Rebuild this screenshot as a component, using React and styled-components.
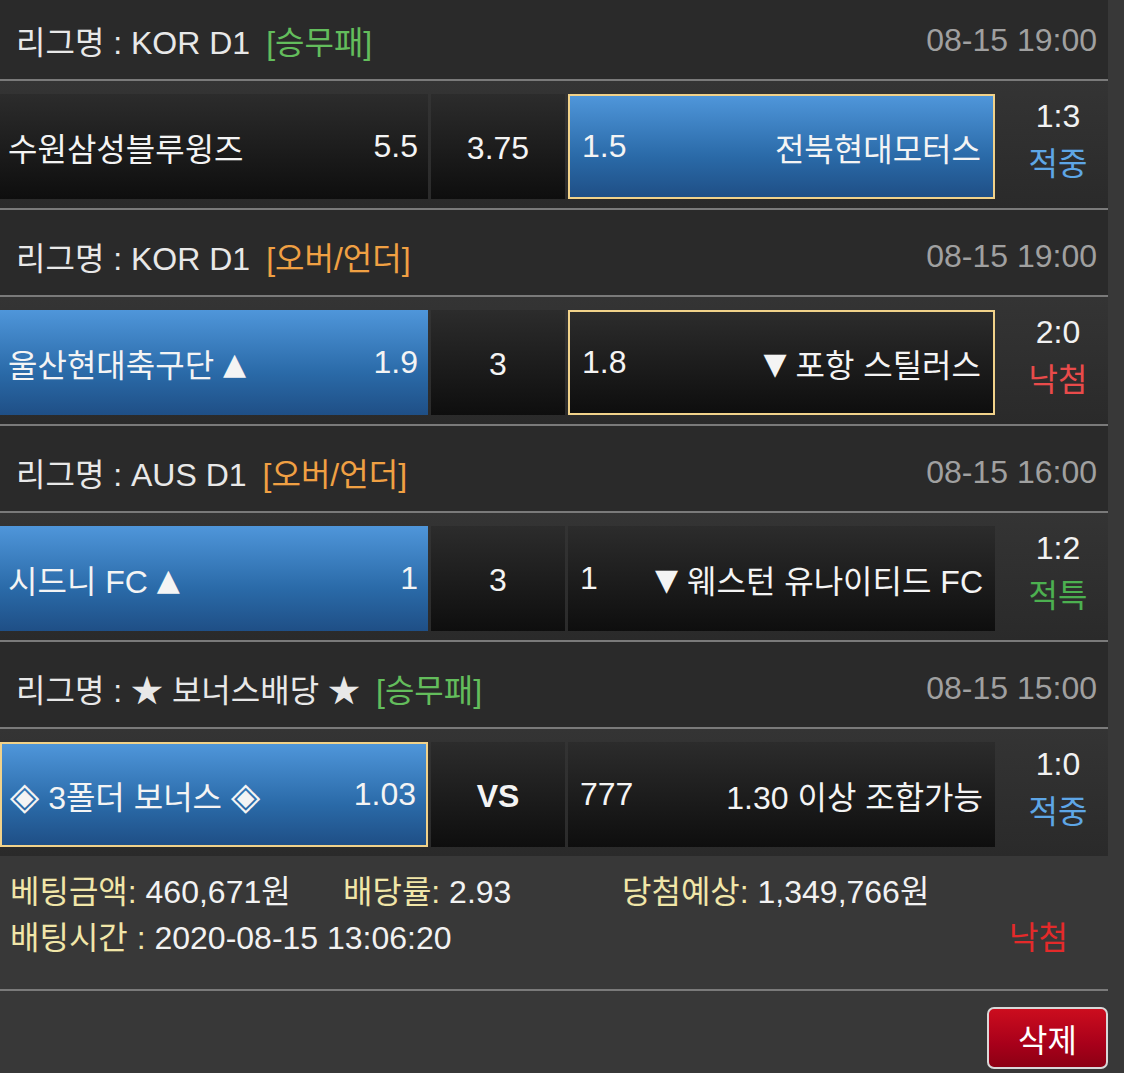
import React from "react";
import styled, { createGlobalStyle } from "styled-components";

const GlobalStyle = createGlobalStyle`
  body {
    margin: 0;
    background: #383838;
    font-family: "Liberation Sans", Arial, "Noto Sans CJK KR", sans-serif;
    color: #f2f2f2;
  }
`;

const Page = styled.div`
  width: 1108px;
  margin-top: -6px;
`;

const Header = styled.div`
  height: 87px;
  box-sizing: border-box;
  padding: 7px 11px 0 16px;
  background: #2a2a2a;
  display: flex;
  align-items: center;
  justify-content: space-between;
  font-size: 32px;
  border-bottom: 2px solid #7a7a7a;
`;

const League = styled.div`
  color: #e8e8e8;
  display: flex;
  align-items: center;
`;

const Tag = styled.span`
  margin-left: 16px;
  color: ${(p) => (p.kind === "ou" ? "#f0a043" : "#63bd5c")};
`;

const Time = styled.div`
  color: #a0a0a0;
`;

const Row = styled.div`
  display: grid;
  grid-template-columns: 428px 134px 427px 1fr;
  column-gap: 3px;
  padding: 13px 0 9px;
  background: linear-gradient(#343434, #2a2a2a);
  border-bottom: ${(p) => (p.last ? "none" : "2px solid #7a7a7a")};
`;

const Cell = styled.div`
  height: 105px;
  box-sizing: border-box;
  display: flex;
  align-items: center;
  justify-content: ${(p) => (p.center ? "center" : "space-between")};
  padding: ${(p) => (p.center ? "4px 0 0" : p.away ? "0 12px 0 12px" : "0 10px 0 8px")};
  font-size: 32px;
  font-weight: ${(p) => (p.bold ? 700 : 400)};
  color: #f4f4f4;
  background: ${(p) =>
    p.blue
      ? "linear-gradient(#4f96da, #2a6aa8 60%, #1f4f86)"
      : "linear-gradient(#2c2c2c, #0e0e0e)"};
  border: ${(p) => (p.picked ? "2px solid #f1d28a" : "none")};
  white-space: pre;
`;

const Mark = styled.span`
  font-family: "DejaVu Sans", sans-serif;
  font-size: ${(p) => (p.big ? 38 : 30)}px;
  vertical-align: ${(p) => (p.big ? 0 : 3)}px;
`;

const Score = styled.div`
  height: 105px;
  display: flex;
  flex-direction: column;
  align-items: center;
  justify-content: center;
  padding: 0 0 14px 10px;
  box-sizing: border-box;
  font-size: 32px;
  line-height: 48px;
`;

const Result = styled.span`
  color: ${(p) => p.color};
`;

const Summary = styled.div`
  padding: 13px 40px 28px 10px;
  font-size: 32px;
  line-height: 46px;
  border-bottom: 2px solid #7a7a7a;
`;

const SummaryLine = styled.div`
  display: flex;
  justify-content: ${(p) => (p.spread ? "space-between" : "flex-start")};
`;

const Stat = styled.div`
  width: ${(p) => p.w}px;
  white-space: nowrap;
`;

const Label = styled.span`
  color: #f1e6a8;
`;

const Footer = styled.div`
  display: flex;
  justify-content: flex-end;
  padding-top: 16px;
`;

const DeleteButton = styled.button`
  width: 121px;
  height: 62px;
  border: 2px solid #d8d8d8;
  border-radius: 7px;
  background: linear-gradient(#cc0d1e, #a8001a 60%, #8c0014);
  color: #ffffff;
  font-family: inherit;
  font-size: 32px;
  cursor: pointer;
`;

const bets = [
  {
    league: "KOR D1",
    tag: "[승무패]",
    kind: "wdl",
    time: "08-15 19:00",
    home: <>수원삼성블루윙즈</>,
    homeOdd: "5.5",
    draw: "3.75",
    awayOdd: "1.5",
    away: <>전북현대모터스</>,
    pick: "away",
    score: "1:3",
    result: "적중",
    color: "#5ea6e6",
  },
  {
    league: "KOR D1",
    tag: "[오버/언더]",
    kind: "ou",
    time: "08-15 19:00",
    home: <>{"울산현대축구단 "}<Mark>▲</Mark></>,
    homeOdd: "1.9",
    draw: "3",
    awayOdd: "1.8",
    away: <><Mark>▼</Mark>{" 포항 스틸러스"}</>,
    pick: "away",
    blueHome: true,
    score: "2:0",
    result: "낙첨",
    color: "#e94b4b",
  },
  {
    league: "AUS D1",
    tag: "[오버/언더]",
    kind: "ou",
    time: "08-15 16:00",
    home: <>{"시드니 FC "}<Mark>▲</Mark></>,
    homeOdd: "1",
    draw: "3",
    awayOdd: "1",
    away: <><Mark>▼</Mark>{" 웨스턴 유나이티드 FC"}</>,
    pick: "none",
    blueHome: true,
    score: "1:2",
    result: "적특",
    color: "#4cb050",
  },
  {
    league: "★ 보너스배당 ★",
    tag: "[승무패]",
    kind: "wdl",
    time: "08-15 15:00",
    home: <><Mark big>◈</Mark>{" 3폴더 보너스 "}<Mark big>◈</Mark></>,
    homeOdd: "1.03",
    draw: "VS",
    bold: true,
    awayOdd: "777",
    away: <>1.30 이상 조합가능</>,
    pick: "home",
    score: "1:0",
    result: "적중",
    color: "#5ea6e6",
  },
];

export default function App() {
  return (
    <>
      <GlobalStyle />
      <Page>
        {bets.map((b, i) => (
          <div key={i}>
            <Header>
              <League>
                리그명 : {b.league}
                <Tag kind={b.kind}>{b.tag}</Tag>
              </League>
              <Time>{b.time}</Time>
            </Header>
            <Row last={i === bets.length - 1}>
              <Cell blue={b.pick === "home" || b.blueHome} picked={b.pick === "home"}>
                <span>{b.home}</span>
                <span>{b.homeOdd}</span>
              </Cell>
              <Cell center bold={b.bold}>
                {b.draw}
              </Cell>
              <Cell away blue={b.pick === "away" && !b.blueHome} picked={b.pick === "away"}>
                <span>{b.awayOdd}</span>
                <span>{b.away}</span>
              </Cell>
              <Score>
                <span>{b.score}</span>
                <Result color={b.color}>{b.result}</Result>
              </Score>
            </Row>
          </div>
        ))}
        <Summary>
          <SummaryLine>
            <Stat w={333}>
              <Label>베팅금액:</Label> 460,671원
            </Stat>
            <Stat w={279}>
              <Label>배당률:</Label> 2.93
            </Stat>
            <Stat>
              <Label>당첨예상:</Label> 1,349,766원
            </Stat>
          </SummaryLine>
          <SummaryLine spread>
            <Stat>
              <Label>배팅시간 :</Label> 2020-08-15 13:06:20
            </Stat>
            <Result color="#e42a2a">낙첨</Result>
          </SummaryLine>
        </Summary>
        <Footer>
          <DeleteButton>삭제</DeleteButton>
        </Footer>
      </Page>
    </>
  );
}
